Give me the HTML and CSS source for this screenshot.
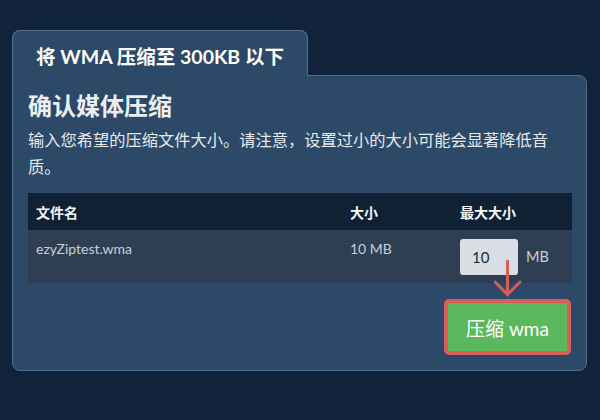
FILE: index.html
```html
<!DOCTYPE html>
<html lang="zh">
<head>
<meta charset="utf-8">
<title>将 WMA 压缩至 300KB 以下</title>
<link rel="stylesheet" href="styles.css">
</head>
<body>
<div class="page">
  <div class="tab">将 WMA 压缩至 300KB 以下</div>
  <div class="panel">
    <h2 class="heading">确认媒体压缩</h2>
    <p class="desc">输入您希望的压缩文件大小。请注意，设置过小的大小可能会显著降低音质。</p>
    <table class="files">
      <thead>
        <tr>
          <th class="col-name">文件名</th>
          <th class="col-size">大小</th>
          <th class="col-max">最大大小</th>
        </tr>
      </thead>
      <tbody>
        <tr>
          <td>ezyZiptest.wma</td>
          <td>10 MB</td>
          <td>
            <div class="max-cell">
              <div class="input-wrap">
                <input class="size-input" type="text" value="10">
                <svg class="arrow" width="28" height="40" viewBox="0 0 28 40">
                  <path d="M13.5 2 V36 M1 23 L13.5 35.5 L26 23" fill="none" stroke="#d85c57" stroke-width="3" stroke-linecap="round" stroke-linejoin="round"/>
                </svg>
              </div>
              <span class="unit">MB</span>
            </div>
          </td>
        </tr>
      </tbody>
    </table>
    <div class="actions">
      <button class="compress-btn" type="button">压缩 wma</button>
    </div>
  </div>
</div>
</body>
</html>
```

FILE: styles.css
```css
html, body {
  margin: 0;
  padding: 0;
}
body {
  background: #11233a;
  font-family: "Lato", "Noto Sans CJK SC", sans-serif;
  color: #e9edf1;
}
.page {
  padding: 30px 13px 0 12px;
  width: 575px;
}
.tab {
  position: relative;
  z-index: 1;
  display: inline-block;
  background: #2c4968;
  border: 1px solid #4f6d8e;
  border-bottom: none;
  border-radius: 8px 8px 0 0;
  padding: 14px 23px 7px;
  margin-bottom: -1px;
  font-size: 19.5px;
  line-height: 24px;
  font-weight: 700;
  color: #ffffff;
}
.panel {
  background: #2c4968;
  border: 1px solid #4f6d8e;
  border-radius: 0 8px 8px 8px;
  padding: 15px 15px 15px 15px;
}
.heading {
  margin: 0;
  font-size: 24px;
  line-height: 30px;
  font-weight: 700;
  color: #eceff2;
}
.desc {
  margin: 6px 0 0;
  max-width: 530px;
  font-size: 16.25px;
  line-height: 26.5px;
  color: #e6eaee;
}
.files {
  margin-top: 13px;
  width: 544px;
  border-collapse: collapse;
  table-layout: fixed;
}
.files th, .files td {
  box-sizing: border-box;
}
.col-name { width: 314px; }
.col-size { width: 110px; }
.col-max { width: 120px; }
.files th {
  background: #102133;
  height: 37px;
  padding: 0 8px;
  text-align: left;
  font-size: 14px;
  font-weight: 700;
  color: #f4f6f8;
}
.files td {
  background: #2e3f53;
  height: 53px;
  padding: 9px 8px 8px;
  vertical-align: top;
  font-size: 14px;
  line-height: 20px;
  color: #c9cfd7;
}
.max-cell {
  display: flex;
  align-items: center;
}
.input-wrap {
  position: relative;
  width: 58px;
  height: 36px;
}
.size-input {
  box-sizing: border-box;
  width: 58px;
  height: 36px;
  border: none;
  border-radius: 3px;
  background: #d9dee5;
  padding: 0 0 0 12px;
  font-family: "Lato", sans-serif;
  font-size: 15px;
  color: #1f2a36;
  outline: none;
}
.arrow {
  position: absolute;
  left: 34px;
  top: 20px;
}
.unit {
  margin-left: 8px;
  font-size: 14.5px;
  color: #c9cfd7;
}
.actions {
  display: flex;
  justify-content: flex-end;
  margin-top: 16px;
}
.compress-btn {
  box-sizing: border-box;
  width: 127px;
  height: 56px;
  background: #5cb85c;
  border: 4px solid #d85f5a;
  border-radius: 5px;
  font-family: "Lato", "Noto Sans CJK SC", sans-serif;
  font-size: 19px;
  color: #ffffff;
  padding: 0;
}
```
